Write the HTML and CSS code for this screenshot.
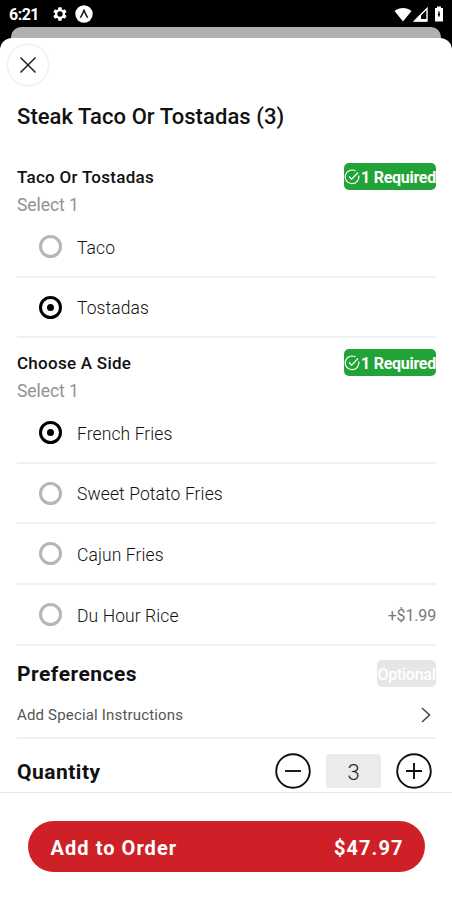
FILE: index.html
```html
<!DOCTYPE html>
<html lang="en">
<head>
<meta charset="utf-8">
<title>Steak Taco Or Tostadas</title>
<link rel="stylesheet" href="styles.css">
</head>
<body>
<div class="phone">
  <header class="status">
    <span class="time">6:21</span>
    <svg class="gear" width="16" height="16" viewBox="0 0 24 24"><path fill="#fff" fill-rule="evenodd" d="M19.4 13a7.500 7.500 0 0 0 0-2l2.100-1.600a.5.5 0 0 0 .1-.7l-2-3.400a.5.5 0 0 0-.6-.2l-2.500 1a7.300 7.300 0 0 0-1.700-1l-.4-2.700a.5.5 0 0 0-.5-.4h-4a.5.5 0 0 0-.5.400L9 5.100a7.600 7.600 0 0 0-1.700 1l-2.500-1a.5.5 0 0 0-.6.200l-2 3.400a.5.5 0 0 0 .1.700L4.500 11a8 8 0 0 0 0 2l-2.200 1.600a.5.5 0 0 0-.1.700l2 3.400c.1.200.4.300.6.200l2.500-1a7.300 7.300 0 0 0 1.700 1l.4 2.700c0 .2.200.4.500.4h4c.3 0 .5-.2.500-.4l.4-2.700a7.600 7.600 0 0 0 1.700-1l2.500 1c.2.100.5 0 .6-.2l2-3.400a.5.5 0 0 0-.1-.7zM12 16a4 4 0 1 1 0-8 4 4 0 0 1 0 8z"/></svg>
    <svg class="expo" width="18" height="18" viewBox="0 0 18 18"><circle cx="9" cy="9" r="8.700" fill="#fff"/><path d="M5.300 12.600C7 10.500 8 7.500 9 5.400c1 2.100 2 5.100 3.700 7.200" fill="none" stroke="#111" stroke-width="1.500"/></svg>
    <svg class="wifi" width="18" height="15" viewBox="0 0 18 15"><path d="M.5 4C5.500-.1 12.500-.1 17.500 4L9 14.500z" fill="#fff"/></svg>
    <svg class="signal" width="15" height="15" viewBox="0 0 15 15"><path d="M1.500 14 14 1.500V14z" fill="none" stroke="#fff" stroke-width="1.400"/><path d="M1 14.500 8 7.500v7zM8 12h6v2.500H8z" fill="#fff"/></svg>
    <svg class="battery" width="10" height="16" viewBox="0 0 10 16"><path d="M3 .5h4v1.500h2v13.500H1V2h2z" fill="#fff"/><path d="M4.300 5.500h1.400V8h.6L5 11.500 3.700 8h.6z" fill="#000"/></svg>
  </header>
  <div class="behind"></div>
  <main class="sheet">
    <button class="close" aria-label="Close"><svg width="18" height="18" viewBox="0 0 18 18"><path d="M1.500 1.500l15 15M16.500 1.500l-15 15" stroke="#222" stroke-width="1.500"/></svg></button>
    <h1 class="title"><span>Steak Taco Or Tostadas (3)</span></h1>

    <section class="group">
      <div class="head"><h2>Taco Or Tostadas</h2><span class="badge"><svg width="16" height="16" viewBox="0 0 16 16"><path d="M14.700 6.500A6.800 6.800 0 1 1 11.500 2M5 7.500l2.700 2.700L14 3.500" fill="none" stroke="#fff" stroke-width="1.200"/></svg><span>1 Required</span></span></div>
      <p class="hint"><span>Select 1</span></p>
      <div class="option"><i class="radio"></i><span class="name">Taco</span></div>
      <div class="option"><i class="radio on"></i><span class="name">Tostadas</span></div>
    </section>

    <section class="group">
      <div class="head"><h2>Choose A Side</h2><span class="badge"><svg width="16" height="16" viewBox="0 0 16 16"><path d="M14.700 6.500A6.800 6.800 0 1 1 11.500 2M5 7.500l2.700 2.700L14 3.500" fill="none" stroke="#fff" stroke-width="1.200"/></svg><span>1 Required</span></span></div>
      <p class="hint"><span>Select 1</span></p>
      <div class="option"><i class="radio on"></i><span class="name">French Fries</span></div>
      <div class="option"><i class="radio"></i><span class="name">Sweet Potato Fries</span></div>
      <div class="option"><i class="radio"></i><span class="name">Cajun Fries</span></div>
      <div class="option"><i class="radio"></i><span class="name">Du Hour Rice</span><span class="price">+$1.99</span></div>
    </section>

    <section class="prefs">
      <div class="head"><h3>Preferences</h3><span class="badge optional"><span>Optional</span></span></div>
      <div class="special"><span>Add Special Instructions</span><svg width="12" height="18" viewBox="0 0 12 18"><path d="M2 2l7.500 7L2 16" fill="none" stroke="#444" stroke-width="1.500"/></svg></div>
    </section>

    <section class="quantity">
      <h3>Quantity</h3>
      <svg width="36" height="36" viewBox="0 0 36 36" fill="none" stroke="#111" stroke-width="1.900"><circle cx="18" cy="18" r="16.800"/><path d="M10 18h16"/></svg>
      <span class="count">3</span>
      <svg width="36" height="36" viewBox="0 0 36 36" fill="none" stroke="#111" stroke-width="1.900"><circle cx="18" cy="18" r="16.800"/><path d="M10 18h16M18 10v16"/></svg>
    </section>
  </main>
  <footer class="footer">
    <button class="order"><span>Add to Order</span><span class="total">$47.97</span></button>
  </footer>
</div>
</body>
</html>
```
FILE: styles.css
```css
* { box-sizing: border-box; }
body { margin: 0; background: #000; font-family: Roboto, "Liberation Sans", sans-serif; color: #111; }
h1, h2, h3, p { margin: 0; }
button { font: inherit; border: 0; padding: 0; }
svg { display: block; flex: none; }
.phone { width: 452px; height: 900px; display: flex; flex-direction: column; overflow: hidden; background: #000; }
.status { height: 27px; flex: none; display: flex; align-items: center; padding: 1px 8px 0 9px; color: #fff; }
.time { font-size: 16px; font-weight: 700; width: 43px; letter-spacing: -.5px; }
.gear { margin-right: 7px; }
.wifi { margin-left: auto; margin-right: 1px; }
.signal { margin-right: 6px; }
.behind { height: 11px; flex: none; margin: 0 11px; border-radius: 10px 10px 0 0; background: #b0b0b0; }
.sheet { height: 754px; flex: none; padding: 7px 16px 0 17px; border-radius: 12px 12px 0 0; background: #fff; overflow: hidden; }
.close { width: 40px; height: 40px; margin: 0 0 1px -9px; border-radius: 50%; background: #fff; box-shadow: 0 0 3px rgba(0,0,0,.18); display: grid; place-items: center; }
.title { height: 60px; line-height: 61px; font-size: 22px; font-weight: 500; letter-spacing: .06px; white-space: nowrap; }
.group { padding-top: 11px; }
.title + .group { padding-top: 17px; height: 192px; }
.head { display: flex; align-items: center; justify-content: space-between; height: 28px; }
h2 { font-size: 17px; font-weight: 500; letter-spacing: .27px; line-height: 28px; }
.badge { width: 92px; height: 27px; margin-bottom: 1px; border-radius: 5px; background: #22a337; color: #fff; display: flex; align-items: center; justify-content: center; font-size: 16px; font-weight: 700; letter-spacing: -.28px; white-space: nowrap; }
.badge span { padding-top: 1px; }
.badge svg { margin-right: 1px; }
.hint { height: 26px; line-height: 28px; font-size: 17.500px; font-weight: 400; letter-spacing: -.05px; color: #929292; }
.option { height: 61px; border-bottom: 2px solid #f0f0f0; display: flex; align-items: center; padding-left: 22px; }
.option:nth-of-type(3) { height: 60px; }
.radio { width: 23px; height: 23px; border: 3px solid #b5b5b5; border-radius: 50%; display: grid; place-items: center; margin-right: 15px; }
.radio.on { border-color: #000; }
.radio.on::after { content: ""; width: 7px; height: 7px; border-radius: 50%; background: #000; }
.name { font-size: 17.500px; font-weight: 300; color: #111; letter-spacing: .1px; padding-top: 2px; }
.price { margin-left: auto; font-size: 16px; letter-spacing: -.15px; color: #777; padding-top: 1px; }
.prefs { padding-top: 14px; border-bottom: 2px solid #f0f0f0; height: 93px; }
h3 { font-size: 21px; font-weight: 700; letter-spacing: .5px; }
.optional { width: 59px; background: #e6e6e6; font-weight: 500; }
.special { height: 50px; display: flex; align-items: center; justify-content: space-between; padding: 4px 4px 0 0; font-size: 15px; letter-spacing: .17px; color: #555; }
.quantity { height: 64px; padding-right: 4px; display: flex; align-items: center; }
.quantity h3 { margin-right: auto; padding-top: 2px; }
.count { width: 55px; height: 34px; margin: 0 15px; padding-top: 2px; border-radius: 3px; background: #ebebeb; display: grid; place-items: center; font-size: 22px; color: #222; font-weight: 300; }
.footer { height: 108px; flex: none; border-top: 1px solid #e8e8e8; background: #fff; padding: 28px 27px 0 28px; }
.order { width: 100%; height: 51px; border-radius: 26px; background: #cf2027; color: #fff; display: flex; align-items: center; justify-content: space-between; padding: 2px 21.500px 0 22.500px; font-size: 20px; font-weight: 700; letter-spacing: 1.05px; }
```
